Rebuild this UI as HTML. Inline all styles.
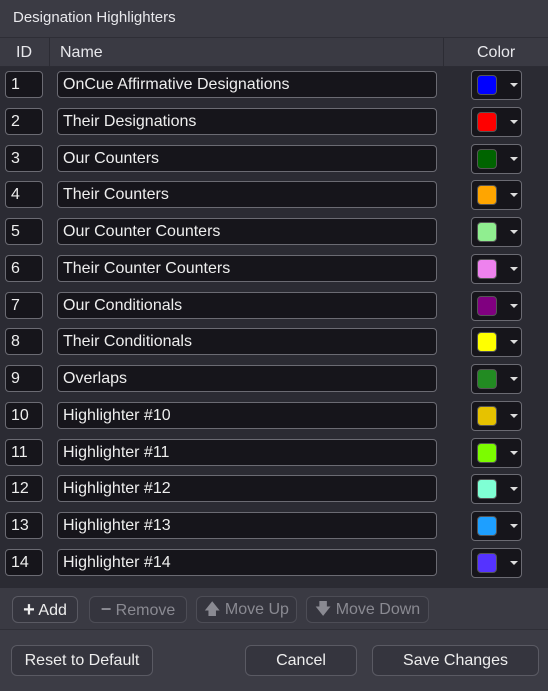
<!DOCTYPE html>
<html><head><meta charset="utf-8"><style>
*{box-sizing:border-box;margin:0;padding:0}
body{width:548px;height:691px;background:#3c3c45;font-family:"Liberation Sans",sans-serif;color:#e8e8ec;position:relative;overflow:hidden}
.a{position:absolute}
.title{left:0;top:0;width:548px;height:38px;background:#3b3b44;font-size:15px;line-height:36px;padding-left:13px;border-bottom:1px solid #2e2e36}
.hdr{left:0;top:38px;width:548px;height:29px;background:#3a3a43;font-size:16px;line-height:30px;border-bottom:1px solid #2c2c34}
.body{left:0;top:67px;width:548px;height:521px;background:#2b2b33}
.in{position:absolute;height:27px;background:#16151b;border:1.5px solid #6b6b73;border-radius:4px;font-size:16px;line-height:26px;padding-left:5px;color:#eee}
.sw{position:absolute;width:20px;height:20px;border:1.5px solid #555;border-radius:4px;top:4px;left:5px}
.tri{position:absolute;left:38px;top:12px;width:0;height:0;border-left:4px solid transparent;border-right:4px solid transparent;border-top:4px solid #ddd}
.tb{left:0;top:588px;width:548px;height:42px;background:#3a3a43;border-bottom:1px solid #2f2f37}
.btn{position:absolute;border:1.5px solid #5a5a63;border-radius:6px;background:#35353e;font-size:16px;text-align:center;color:#eee}
.dis{color:#8a8a92;border-color:#4d4d56}
</style></head><body>
<div class="a title">Designation Highlighters</div>
<div class="a hdr"><span class="a" style="left:16px">ID</span><div class="a" style="left:49px;top:0;width:1px;height:29px;background:#2c2c34"></div><span class="a" style="left:60px">Name</span><div class="a" style="left:443px;top:0;width:1px;height:29px;background:#2c2c34"></div><span class="a" style="left:477px">Color</span></div>
<div class="a body" id="b"></div>
<div class="a tb">
<div class="btn" style="left:12px;top:8px;width:66px;height:27px;line-height:25px"><b style="font-size:20px;position:relative;top:1px">+</b> Add</div>
<div class="btn dis" style="left:89px;top:8px;width:98px;height:27px;line-height:25px"><b style="font-size:18px">−</b> Remove</div>
<div class="btn dis" style="left:196px;top:8px;width:101px;height:27px;line-height:25px">🡅 Move Up</div>
<div class="btn dis" style="left:306px;top:8px;width:123px;height:27px;line-height:25px">🡇 Move Down</div>
</div>
<div class="btn" style="left:11px;top:645px;width:142px;height:31px;line-height:30px">Reset to Default</div>
<div class="btn" style="left:245px;top:645px;width:112px;height:31px;line-height:30px">Cancel</div>
<div class="btn" style="left:372px;top:645px;width:167px;height:31px;line-height:30px">Save Changes</div>
<script>
var n=["OnCue Affirmative Designations","Their Designations","Our Counters","Their Counters","Our Counter Counters","Their Counter Counters","Our Conditionals","Their Conditionals","Overlaps","Highlighter #10","Highlighter #11","Highlighter #12","Highlighter #13","Highlighter #14"];
var c=["#0000ff","#ff0000","#006400","#ffa500","#90ee90","#ee82ee","#800080","#ffff00","#228b22","#e6c200","#7cfc00","#7fffd4","#1e9fff","#5533ff"];
var h="";
for(var i=0;i<14;i++){var y=4+i*36.77;
h+='<div class="in" style="left:5px;top:'+y+'px;width:38px">'+(i+1)+'</div>';
h+='<div class="in" style="left:57px;top:'+y+'px;width:380px">'+n[i]+'</div>';
h+='<div class="in" style="left:471px;top:'+(y-1)+'px;width:51px;height:30px;padding:0"><div class="sw" style="background:'+c[i]+'"></div><div class="tri"></div></div>';}
document.getElementById("b").innerHTML=h;
</script>
</body></html>
